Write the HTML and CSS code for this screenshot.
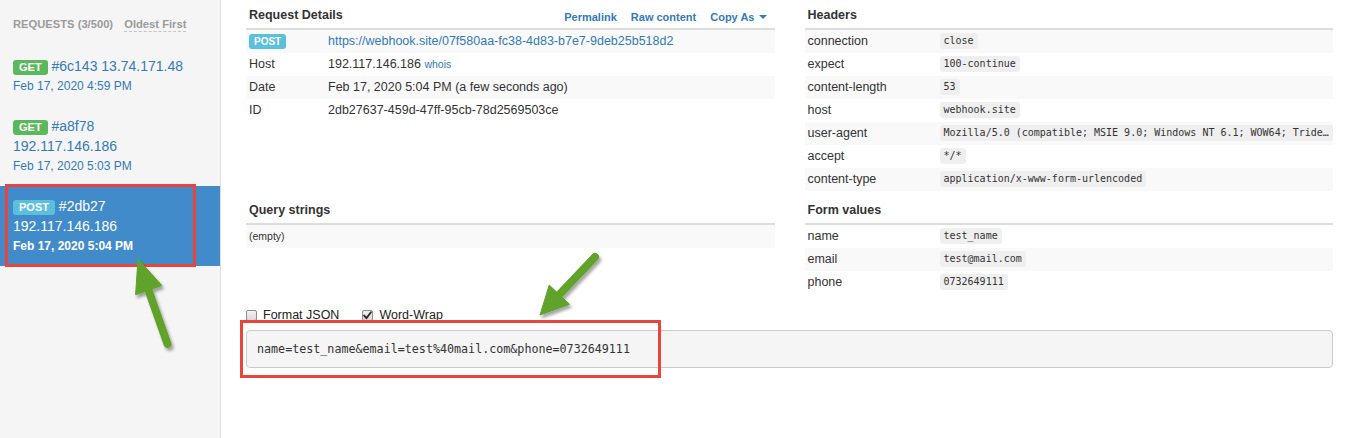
FILE: index.html
```html
<!DOCTYPE html>
<html lang="en">
<head>
<meta charset="utf-8">
<title>Webhook.site</title>
<link rel="stylesheet" href="styles.css">
</head>
<body>
<aside class="sidebar">
  <div class="side-head"><span>REQUESTS (3/500)</span> <span class="sort">Oldest First</span></div>
  <a class="req">
    <div><span class="badge get">GET</span> #6c143 13.74.171.48</div>
    <div class="req-date">Feb 17, 2020 4:59 PM</div>
  </a>
  <a class="req">
    <div><span class="badge get">GET</span> #a8f78</div>
    <div>192.117.146.186</div>
    <div class="req-date">Feb 17, 2020 5:03 PM</div>
  </a>
  <a class="req active">
    <div><span class="badge post">POST</span> #2db27</div>
    <div>192.117.146.186</div>
    <div class="req-date">Feb 17, 2020 5:04 PM</div>
  </a>
</aside>

<main class="main">
  <div class="grid">
    <section class="panel">
      <div class="panel-head">
        <h3>Request Details</h3>
        <div class="links"><a>Permalink</a><a>Raw content</a><a>Copy As <span class="caret"></span></a></div>
      </div>
      <table class="kv striped-odd">
        <colgroup><col class="k-details"><col></colgroup>
        <tr><td><span class="badge post small">POST</span></td><td><a class="link">https://webhook.site/07f580aa-fc38-4d83-b7e7-9deb25b518d2</a></td></tr>
        <tr><td>Host</td><td>192.117.146.186 <a class="link whois">whois</a></td></tr>
        <tr><td>Date</td><td>Feb 17, 2020 5:04 PM (a few seconds ago)</td></tr>
        <tr><td>ID</td><td>2db27637-459d-47ff-95cb-78d2569503ce</td></tr>
      </table>
    </section>

    <section class="panel">
      <div class="panel-head"><h3>Headers</h3></div>
      <table class="kv striped-odd">
        <colgroup><col class="k-headers"><col></colgroup>
        <tr><td>connection</td><td><code class="code">close</code></td></tr>
        <tr><td>expect</td><td><code class="code">100-continue</code></td></tr>
        <tr><td>content-length</td><td><code class="code">53</code></td></tr>
        <tr><td>host</td><td><code class="code">webhook.site</code></td></tr>
        <tr><td>user-agent</td><td><code class="code">Mozilla/5.0 (compatible; MSIE 9.0; Windows NT 6.1; WOW64; Trident/5.0)</code></td></tr>
        <tr><td>accept</td><td><code class="code">*/*</code></td></tr>
        <tr><td>content-type</td><td><code class="code">application/x-www-form-urlencoded</code></td></tr>
      </table>
    </section>

    <section class="panel">
      <div class="panel-head"><h3>Query strings</h3></div>
      <table class="kv striped-odd">
        <tr><td class="empty">(empty)</td></tr>
      </table>
    </section>

    <section class="panel">
      <div class="panel-head"><h3>Form values</h3></div>
      <table class="kv striped-even">
        <colgroup><col class="k-headers"><col></colgroup>
        <tr><td>name</td><td><code class="code">test_name</code></td></tr>
        <tr><td>email</td><td><code class="code">test@mail.com</code></td></tr>
        <tr><td>phone</td><td><code class="code">0732649111</code></td></tr>
      </table>
    </section>
  </div>

  <div class="opts">
    <label class="opt"><span class="cb"></span>Format JSON</label>
    <label class="opt"><span class="cb checked"><svg width="9" height="9" viewBox="0 0 9 9"><path d="M1.2 4.6 L3.4 7.2 L7.9 1.2" fill="none" stroke="#2b2b2b" stroke-width="1.9" stroke-linecap="round" stroke-linejoin="round"/></svg></span>Word-Wrap</label>
  </div>
  <pre class="body-box">name=test_name&amp;email=test%40mail.com&amp;phone=0732649111</pre>
</main>

<svg class="annot" width="1353" height="438" viewBox="0 0 1353 438" aria-hidden="true">
  <defs>
    <filter id="sh" x="-30%" y="-30%" width="160%" height="160%">
      <feDropShadow dx="2" dy="3" stdDeviation="1.6" flood-color="#000" flood-opacity="0.35"/>
    </filter>
  </defs>
  <g fill="none" stroke="#e8453c" stroke-width="3">
    <rect x="6.5" y="185.5" width="188" height="80"/>
    <rect x="241.5" y="321.5" width="418" height="55"/>
  </g>
  <g fill="#61a22c" stroke="#61a22c" filter="url(#sh)">
    <line x1="147" y1="286" x2="167.5" y2="344" stroke-width="8" stroke-linecap="round"/>
    <polygon points="138,259 162,285.6 135.6,294.8" stroke-width="1" stroke-linejoin="round"/>
    <line x1="557" y1="297" x2="595" y2="257" stroke-width="8" stroke-linecap="round"/>
    <polygon points="540,315 569.5,304.3 549.2,285.1" stroke-width="1" stroke-linejoin="round"/>
  </g>
</svg>
</body>
</html>
```

FILE: styles.css
```css
* { box-sizing: border-box; }
html, body { margin: 0; height: 100%; }
body {
  font-family: "Liberation Sans", Arial, sans-serif;
  color: #333;
  background: #fff;
  display: flex;
  position: relative;
  overflow: hidden;
  height: 438px;
}

/* Sidebar */
.sidebar {
  width: 221px;
  flex: none;
  background: #f5f5f5;
  border-right: 1px solid #dedede;
  height: 438px;
}
.side-head {
  padding: 14px 13px 12px;
  line-height: 20px;
  font-size: 11.2px;
  font-weight: bold;
  color: #9b9b9b;
}
.sort {
  display: inline-block;
  margin-left: 8px;
  line-height: 14px;
  border-bottom: 1px dashed #c4c4c4;
}
.req {
  display: block;
  padding: 10px 13px;
  line-height: 20px;
  font-size: 14px;
  color: #337ab7;
  text-decoration: none;
}
.req-date { font-size: 12px; }
.req.active { background: #428bca; color: #fff; }
.req.active .req-date { font-weight: bold; }

.badge {
  display: inline-block;
  font-size: 11px;
  font-weight: bold;
  line-height: 11px;
  padding: 2px 6px;
  border-radius: 3px;
  color: #fff;
}
.get { background: #5cb85c; }
.post { background: #5bc0de; }
.badge.small {
  font-size: 10px;
  line-height: 11px;
  padding: 2px 5px;
  vertical-align: top;
  margin-top: 1px;
}

/* Main */
.main {
  flex: 1;
  min-width: 0;
  padding: 0 20px 0 25px;
}
.grid {
  display: grid;
  grid-template-columns: 1fr 1fr;
  column-gap: 30px;
  row-gap: 4px;
}
.panel { min-width: 0; }
.panel-head {
  display: flex;
  justify-content: space-between;
  padding: 5px 8px 3px 3px;
}
.panel-head h3 {
  margin: 0;
  font-size: 12.5px;
  line-height: 20px;
  font-weight: bold;
  color: #333;
}
.links {
  display: flex;
  gap: 14px;
  font-size: 11px;
  font-weight: bold;
  line-height: 14px;
  padding-top: 5px;
  color: #337ab7;
}
.caret {
  display: inline-block;
  width: 0;
  height: 0;
  margin-left: 1px;
  vertical-align: 2px;
  border-top: 4px solid #337ab7;
  border-left: 4px solid transparent;
  border-right: 4px solid transparent;
}

.kv {
  width: 100%;
  border-collapse: separate;
  border-spacing: 0;
  table-layout: fixed;
  border-top: 2px solid #ddd;
  font-size: 12.5px;
}
.kv td {
  padding: 3px 0 3px 3px;
  height: 23px;
  line-height: 17px;
  vertical-align: top;
  white-space: nowrap;
  overflow: hidden;
}
.striped-odd tr:nth-child(odd) td { background: #f9f9f9; }
.striped-even tr:nth-child(even) td { background: #f9f9f9; }
.k-details { width: 79px; }
.k-headers { width: 132px; }
.link { color: #337ab7; text-decoration: none; }
.whois { font-size: 10.5px; }
.kv td.empty { font-size: 10.5px; line-height: 17px; }

.code {
  display: inline-block;
  max-width: 100%;
  height: 16px;
  vertical-align: top;
  overflow: hidden;
  text-overflow: ellipsis;
  white-space: nowrap;
  font-family: "DejaVu Sans Mono", monospace;
  font-size: 10px;
  line-height: 12px;
  padding: 2px 4px;
  background: #efefef;
  border-radius: 3px;
  color: #333;
}

/* Options + body */
.opts {
  display: flex;
  align-items: center;
  height: 20px;
  margin-top: 11px;
  font-size: 12.5px;
}
.opt {
  display: flex;
  align-items: center;
  gap: 6px;
  margin-right: 23px;
  color: #222;
}
.cb {
  width: 11px;
  height: 11px;
  border: 1px solid #8e8e8e;
  border-radius: 2px;
  background: linear-gradient(#f3f3f3, #d9d9d9);
  display: flex;
  align-items: center;
  justify-content: center;
}
.body-box {
  margin: 5px 0 0;
  border: 1px solid #ccc;
  border-radius: 4px;
  background: #f5f5f5;
  padding: 9px 10px;
  font-family: "DejaVu Sans Mono", monospace;
  font-size: 11.7px;
  line-height: 18px;
  color: #333;
  white-space: pre-wrap;
}

/* Annotations drawn over the screenshot */
.annot {
  position: absolute;
  left: 0;
  top: 0;
  pointer-events: none;
}
```
